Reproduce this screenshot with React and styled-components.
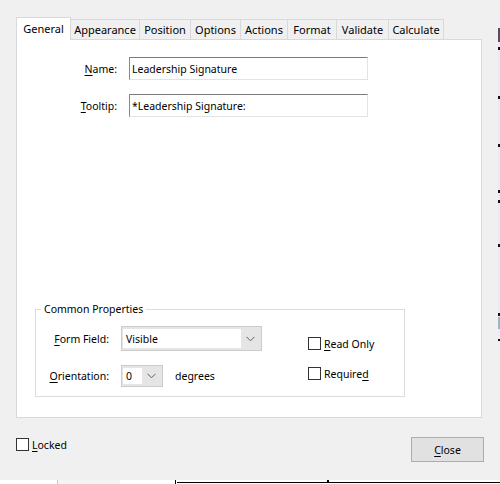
import React from "react";
import styled, { createGlobalStyle } from "styled-components";

const Global = createGlobalStyle`
  html, body { margin: 0; padding: 0; background: #ffffff; }
  body { font-family: "Noto Sans", "Open Sans", sans-serif; font-size: 10.5px; color: #000; }
  * { box-sizing: border-box; }
`;

const Page = styled.div`
  width: 500px;
  height: 484px;
  display: flex;
  flex-direction: column;
  overflow: hidden;
`;

const TopRow = styled.div`
  display: flex;
  height: 480px;
`;

const Dialog = styled.div`
  width: 498px;
  height: 480px;
  background: #f0f0f0;
  display: flex;
  flex-direction: column;
  padding: 17px 15px 0 16px;
`;

const TabBar = styled.div`
  display: flex;
  align-items: flex-end;
  height: 23px;
  margin-bottom: -1px;
  position: relative;
  z-index: 1;
`;

const Tab = styled.div`
  width: ${(p) => p.$w}px;
  height: ${(p) => (p.$active ? 23 : 21)}px;
  margin-left: ${(p) => (p.$first ? 0 : -1)}px;
  border: 1px solid #d9d9d9;
  border-bottom: ${(p) => (p.$active ? "none" : "1px solid #d9d9d9")};
  background: ${(p) => (p.$active ? "#ffffff" : "#f0f0f0")};
  display: flex;
  align-items: center;
  justify-content: center;
  padding-bottom: ${(p) => (p.$active ? 2 : 0)}px;
  position: relative;
  z-index: ${(p) => (p.$active ? 2 : 1)};
  white-space: nowrap;
  font-size: 11px;
`;

const Panel = styled.div`
  width: 466px;
  height: 379px;
  background: #ffffff;
  border: 1px solid #d9d9d9;
  display: flex;
  flex-direction: column;
  padding-top: 17px;
`;

const FieldGrid = styled.div`
  display: grid;
  grid-template-columns: 100px 239px;
  column-gap: 12px;
  row-gap: 14px;
  align-items: center;
`;

const Label = styled.span`
  text-align: right;
  white-space: nowrap;
`;

const Key = styled.span`
  text-decoration: underline;
  text-underline-offset: 2px;
`;

const TextBox = styled.div`
  height: 23px;
  border-top: 1px solid #7a7a7a;
  border-left: 1px solid #8a8a8a;
  border-right: 1px solid #e3e3e3;
  border-bottom: 1px solid #e3e3e3;
  background: #fff;
  display: flex;
  align-items: center;
  padding-left: 2px;
  white-space: nowrap;
`;

const Group = styled.fieldset`
  margin: auto 0 20px 18px;
  width: 370px;
  border: 1px solid #dcdcdc;
  padding: 9px 0 9px 0;
  display: flex;
`;

const Legend = styled.legend`
  margin-left: 5px;
  padding: 0 3px;
  line-height: 16px;
`;

const GroupLeft = styled.div`
  display: grid;
  grid-template-columns: 73px auto;
  column-gap: 12px;
  row-gap: 14px;
  align-items: center;
`;

const Select = styled.div`
  width: ${(p) => p.$w}px;
  height: ${(p) => p.$h}px;
  border: 1px solid #cccccc;
  background: #e5e5e5;
  display: flex;
  align-items: stretch;
  padding: 1px;
`;

const SelectValue = styled.div`
  flex: 1;
  background: #ffffff;
  display: flex;
  align-items: center;
  padding-left: 3px;
  margin: 1px 0;
`;

const SelectArrow = styled.div`
  width: ${(p) => p.$w}px;
  display: flex;
  align-items: center;
  justify-content: center;
`;

const InlineRow = styled.div`
  display: flex;
  align-items: center;
  gap: 12px;
`;

const GroupRight = styled.div`
  display: flex;
  flex-direction: column;
  gap: 17px;
  margin-left: 46px;
  padding-top: 11px;
`;

const CheckRow = styled.label`
  display: flex;
  align-items: center;
  gap: 3px;
  height: 13px;
  white-space: nowrap;
`;

const Box = styled.span`
  width: 13px;
  height: 13px;
  border: 1px solid #333333;
  background: #ffffff;
  flex: none;
`;

const Footer = styled.div`
  display: flex;
  justify-content: space-between;
  align-items: flex-start;
  margin-top: 19px;
  margin-right: -1px;
`;

const LockRow = styled(CheckRow)`
  margin-top: 1px;
`;

const Button = styled.div`
  width: 73px;
  height: 25px;
  background: #e1e1e1;
  border: 1px solid #adadad;
  display: flex;
  align-items: center;
  justify-content: center;
`;

const Strip = styled.svg`
  display: block;
  flex: none;
`;

const Chevron = () => (
  <svg width="9" height="6" viewBox="0 0 9 6">
    <path d="M0.5 0.8 L4.5 4.8 L8.5 0.8" fill="none" stroke="#606060" strokeWidth="1" />
  </svg>
);

const tabs = [
  ["General", 55],
  ["Appearance", 70],
  ["Position", 52],
  ["Options", 51],
  ["Actions", 48],
  ["Format", 50],
  ["Validate", 53],
  ["Calculate", 56],
];

export default function App() {
  return (
    <>
      <Global />
      <Page>
        <TopRow>
          <Dialog>
            <TabBar>
              {tabs.map(([t, w], i) => (
                <Tab key={t} $w={w} $active={i === 0} $first={i === 0}>
                  {t}
                </Tab>
              ))}
            </TabBar>
            <Panel>
              <FieldGrid>
                <Label>
                  <Key>N</Key>ame:
                </Label>
                <TextBox>Leadership Signature</TextBox>
                <Label>
                  <Key>T</Key>ooltip:
                </Label>
                <TextBox>*Leadership Signature:</TextBox>
              </FieldGrid>
              <Group>
                <Legend>Common Properties</Legend>
                <GroupLeft>
                  <Label>
                    <Key>F</Key>orm Field:
                  </Label>
                  <Select $w={141} $h={25}>
                    <SelectValue>Visible</SelectValue>
                    <SelectArrow $w={19}>
                      <Chevron />
                    </SelectArrow>
                  </Select>
                  <Label>
                    <Key>O</Key>rientation:
                  </Label>
                  <InlineRow>
                    <Select $w={42} $h={22}>
                      <SelectValue>0</SelectValue>
                      <SelectArrow $w={19}>
                        <Chevron />
                      </SelectArrow>
                    </Select>
                    <span>degrees</span>
                  </InlineRow>
                </GroupLeft>
                <GroupRight>
                  <CheckRow>
                    <Box />
                    <span>
                      <Key>R</Key>ead Only
                    </span>
                  </CheckRow>
                  <CheckRow>
                    <Box />
                    <span>
                      Require<Key>d</Key>
                    </span>
                  </CheckRow>
                </GroupRight>
              </Group>
            </Panel>
            <Footer>
              <LockRow>
                <Box />
                <span>
                  <Key>L</Key>ocked
                </span>
              </LockRow>
              <Button>
                <span>
                  <Key>C</Key>lose
                </span>
              </Button>
            </Footer>
          </Dialog>
          <Strip width="2" height="480" viewBox="0 0 2 480">
            <rect x="0" y="0" width="2" height="480" fill="#ecebf5" />
            <rect x="0" y="0" width="2" height="28" fill="#f0f0f0" />
            <rect x="0" y="28" width="2" height="14" fill="#5a4a6a" />
            <rect x="0" y="47" width="2" height="3" fill="#111" />
            <rect x="0" y="96" width="2" height="3" fill="#111" />
            <rect x="0" y="144" width="2" height="3" fill="#111" />
            <rect x="0" y="190" width="2" height="3" fill="#111" />
            <rect x="0" y="200" width="2" height="3" fill="#111" />
            <rect x="0" y="244" width="2" height="3" fill="#111" />
            <rect x="0" y="313" width="2" height="3" fill="#111" />
            <rect x="0" y="317" width="2" height="12" fill="#9fb4c8" />
            <rect x="0" y="339" width="2" height="2" fill="#111" />
            <rect x="0" y="342" width="2" height="138" fill="#f0f0f0" />
          </Strip>
        </TopRow>
        <Strip width="500" height="4" viewBox="0 0 500 4">
          <rect x="0" y="0" width="500" height="4" fill="#ffffff" />
          <rect x="57" y="0" width="1" height="4" fill="#c8c8c8" />
          <rect x="58" y="0" width="62" height="4" fill="#f4f4f4" />
          <rect x="175" y="0" width="1" height="4" fill="#000" />
          <rect x="177" y="2" width="323" height="1" fill="#000" />
          <rect x="327" y="0" width="2" height="2" fill="#000" />
        </Strip>
      </Page>
    </>
  );
}
